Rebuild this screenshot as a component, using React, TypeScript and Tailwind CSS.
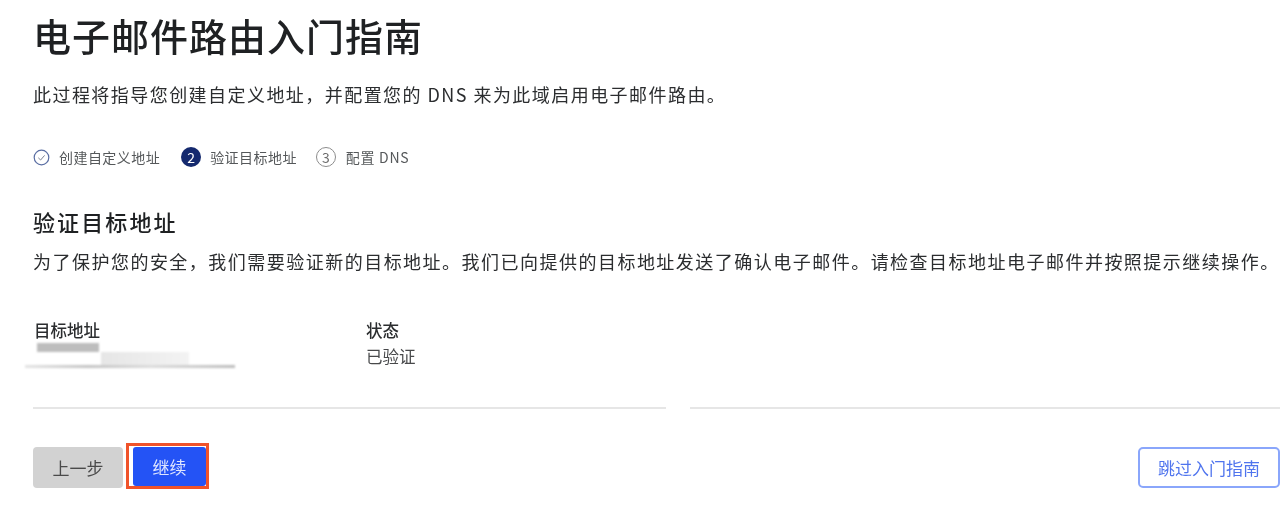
export default function App() {
  const font = { fontFamily: '"Noto Sans CJK SC", Inter, sans-serif' };
  return (
    <div className="w-[1280px] h-[523px] bg-white overflow-hidden text-[#36393a]" style={font}>
      <div className="pl-[34px] pt-[9px] [filter:blur(0.35px)]">
        <h1 className="text-[38px] leading-[52px] font-medium text-[#1f2123] tracking-[1px] -ml-[1px]">电子邮件路由入门指南</h1>
        <p className="mt-[20px] text-[18px] leading-[26px] text-[#2b2d2f] tracking-[1.45px] -ml-[1px] whitespace-nowrap">此过程将指导您创建自定义地址，并配置您的 DNS 来为此域启用电子邮件路由。</p>

        <div className="mt-[38px] h-[24px] flex items-center text-[14px] text-[#55585a]">
          <svg width="17" height="17" viewBox="0 0 17 17" fill="none" className="shrink-0 -ml-[1px]">
            <circle cx="8.5" cy="8.5" r="7.3" stroke="#5a6ea3" strokeWidth="1.2" />
            <path d="M5.3 8.8 7.6 11l4-4.6" stroke="#7a8090" strokeWidth="1" />
          </svg>
          <span className="ml-[9px] tracking-[0.45px]">创建自定义地址</span>
          <span className="ml-[21px] w-[20px] h-[20px] rounded-full bg-[#14296e] text-white flex items-center justify-center text-[14px]">2</span>
          <span className="ml-[9px] tracking-[0.45px]">验证目标地址</span>
          <span className="ml-[19px] w-[20px] h-[20px] rounded-full border border-[#8c8c8c] text-[#6b6b6b] flex items-center justify-center text-[14px]">3</span>
          <span className="ml-[10px] tracking-[0.7px]">配置 DNS</span>
        </div>

        <h2 className="mt-[38px] text-[22px] leading-[28px] font-medium text-[#1f2123] tracking-[2.1px] -ml-[1px]">验证目标地址</h2>
        <p className="mt-[13px] text-[18px] leading-[26px] text-[#2b2d2f] tracking-[1.48px] -ml-[1px] whitespace-nowrap">为了保护您的安全，我们需要验证新的目标地址。我们已向提供的目标地址发送了确认电子邮件。请检查目标地址电子邮件并按照提示继续操作。</p>

        <div className="mt-[44px] flex text-[16.5px] leading-[24px]">
          <div className="w-[332px]">
            <div className="font-medium text-[#2b2d2f]">目标地址</div>
            <div className="-ml-[9px] mt-[1px] flex flex-col blur-[0.8px]">
              <div className="ml-[12px] w-[62px] h-[9px] bg-[#bdbdbd]" />
              <div className="ml-[76px] w-[88px] h-[13px] bg-[linear-gradient(90deg,#e6e6e6,#f3f3f3)]" />
              <div className="h-[3px] w-[210px] bg-[linear-gradient(90deg,#e4e4e4,#c4c4c4_30%,#dcdcdc_60%,#bdbdbd)]" />
            </div>
          </div>
          <div>
            <div className="font-medium text-[#2b2d2f]">状态</div>
            <div className="mt-[2px] text-[#48494b]">已验证</div>
          </div>
        </div>
      </div>

      <div className="mt-[39px] ml-[33px] flex h-[2px]">
        <div className="w-[633px] bg-[#e6e6e6]" />
        <div className="w-[24px]" />
        <div className="flex-1 bg-[#e6e6e6]" />
      </div>

      <div className="mt-[34px] pl-[33px] pr-0 flex items-start justify-between [filter:blur(0.35px)]">
        <div className="flex items-start">
          <button className="mt-[4px] w-[90px] h-[41px] rounded-[4px] bg-[#d2d2d2] text-[#4a4a4a] text-[17px]">上一步</button>
          <div className="ml-[3px] border-[3px] border-[#f0532a] pl-[4px] pt-[1px] w-[83px] h-[46px] flex">
            <button className="flex-1 rounded-[3px] bg-[#2453f5] text-[#dfe6ff] text-[17px]">继续</button>
          </div>
        </div>
        <button className="mt-[4px] w-[142px] h-[41px] rounded-[5px] border-2 border-[#8aa6fb] bg-white text-[#4f74ee] text-[17px]">跳过入门指南</button>
      </div>
    </div>
  );
}
